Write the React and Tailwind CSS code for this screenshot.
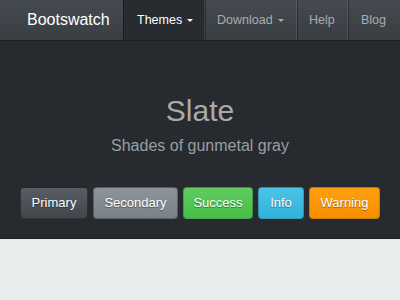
export default function App() {
  const buttons = [
    { label: "Primary", w: "w-[68px]", cls: "bg-gradient-to-b from-[#575d63] to-[#42474c] border-black/40" },
    { label: "Secondary", w: "w-[85px]", cls: "bg-gradient-to-b from-[#8c9399] to-[#7a8288] border-black/30" },
    { label: "Success", w: "w-[70px]", cls: "bg-gradient-to-b from-[#5fcd5f] to-[#46bd46] border-black/20" },
    { label: "Info", w: "w-[46px]", cls: "bg-gradient-to-b from-[#4cc3e6] to-[#2fb4dc] border-black/20" },
    { label: "Warning", w: "w-[71px]", cls: "bg-gradient-to-b from-[#ff9f10] to-[#f78f00] border-black/20" },
  ];

  return (
    <div
      className="w-[400px] h-[300px] overflow-hidden bg-[#e9ecec]"
      style={{ fontFamily: '"Liberation Sans", Arial, sans-serif' }}
    >
      {/* navbar */}
      <nav className="h-[41px] flex overflow-hidden bg-gradient-to-b from-[#454a50] to-[#393e43] border-b border-[#1c1f22]">
        <div className="w-[123px] shrink-0 flex items-center pl-[27px] text-[16px] text-white">
          Bootswatch
        </div>
        <div className="w-[82px] shrink-0 flex items-center gap-[5px] pl-[13px] bg-[#282b30] border-l border-black/30 border-r border-r-white/10 text-[12.5px] text-white">
          Themes
          <span className="w-0 h-0 border-x-[3px] border-x-transparent border-t-[3px] border-t-white mt-[1px]" />
        </div>
        <div className="w-[92px] shrink-0 flex items-center gap-[5px] pl-[11px] border-l border-black/30 border-r border-r-white/10 text-[12.5px] text-[#a9adb0]">
          Download
          <span className="w-0 h-0 border-x-[3px] border-x-transparent border-t-[3px] border-t-[#a9adb0] mt-[1px]" />
        </div>
        <div className="w-[51px] shrink-0 flex items-center pl-[11px] border-l border-black/30 border-r border-r-white/10 text-[12.5px] text-[#a9adb0]">
          Help
        </div>
        <div className="flex-1 shrink-0 flex items-center pl-[12px] border-l border-black/30 text-[12.5px] text-[#a9adb0]">
          Blog
        </div>
      </nav>

      {/* hero */}
      <section className="h-[198px] bg-[#272b30] flex flex-col items-center pt-[55px] border-b border-[#1e2125]">
        <h1 className="text-[30px] leading-none text-[#aaaaaa]">Slate</h1>
        <p className="mt-[12px] text-[16px] leading-none text-[#9a9ea2]">
          Shades of gunmetal gray
        </p>
        <div className="mt-[33px] flex gap-[5px]">
          {buttons.map((b) => (
            <div
              key={b.label}
              className={`${b.w} ${b.cls} h-[32px] rounded-[4px] border flex items-center justify-center text-[13px] text-white [text-shadow:0_1px_1px_rgba(0,0,0,0.4)]`}
            >
              {b.label}
            </div>
          ))}
        </div>
      </section>
    </div>
  );
}
